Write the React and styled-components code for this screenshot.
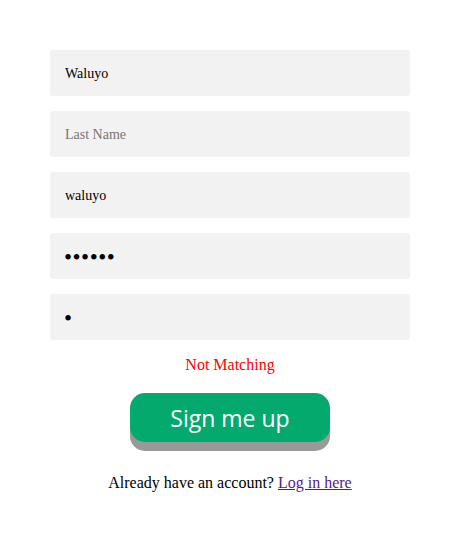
import React from "react";
import styled, { createGlobalStyle } from "styled-components";

const GlobalStyle = createGlobalStyle`
  body {
    margin: 0;
    background: #ffffff;
    font-family: "Liberation Serif", "Times New Roman", serif;
  }
`;

const Page = styled.div`
  width: 460px;
  padding-top: 50px;
  display: flex;
  justify-content: center;
`;

const Form = styled.form`
  width: 360px;
  display: flex;
  flex-direction: column;
  align-items: center;
`;

const Field = styled.input`
  box-sizing: border-box;
  width: 100%;
  height: 46px;
  margin: 0 0 15px;
  padding: ${(p) => (p.type === "password" ? "3px 14px 0" : "1px 15px 0")};
  border: none;
  border-radius: 3px;
  background: #f2f2f2;
  font-family: "Liberation Serif", "Times New Roman", serif;
  font-size: ${(p) => (p.type === "password" ? "23px" : "14px")};
  letter-spacing: ${(p) => (p.type === "password" ? "0.5px" : "normal")};
  color: #000;
  outline: none;

  &::placeholder {
    color: #757575;
  }
`;

const Warning = styled.p`
  margin: 1px 0 19px;
  font-size: 16px;
  color: red;
  line-height: 18px;
`;

const SignUp = styled.button`
  width: 200px;
  height: 49px;
  border: none;
  border-radius: 15px;
  background: #04aa6d;
  box-shadow: 0 9px #999;
  color: #fff;
  font-family: "Open Sans", "Noto Sans", sans-serif;
  font-size: 23px;
  cursor: pointer;
`;

const Footer = styled.p`
  margin: 32px 0 0;
  font-size: 16px;
  color: #000;

  a {
    color: #551a8b;
  }
`;

export default function App() {
  return (
    <>
      <GlobalStyle />
      <Page>
        <Form onSubmit={(e) => e.preventDefault()}>
          <Field type="text" defaultValue="Waluyo" placeholder="First Name" />
          <Field type="text" placeholder="Last Name" />
          <Field type="text" defaultValue="waluyo" placeholder="Username" />
          <Field type="password" defaultValue="123456" placeholder="Password" />
          <Field type="password" defaultValue="1" placeholder="Confirm Password" />
          <Warning>Not Matching</Warning>
          <SignUp type="submit">Sign me up</SignUp>
          <Footer>
            Already have an account? <a href="#login">Log in here</a>
          </Footer>
        </Form>
      </Page>
    </>
  );
}
